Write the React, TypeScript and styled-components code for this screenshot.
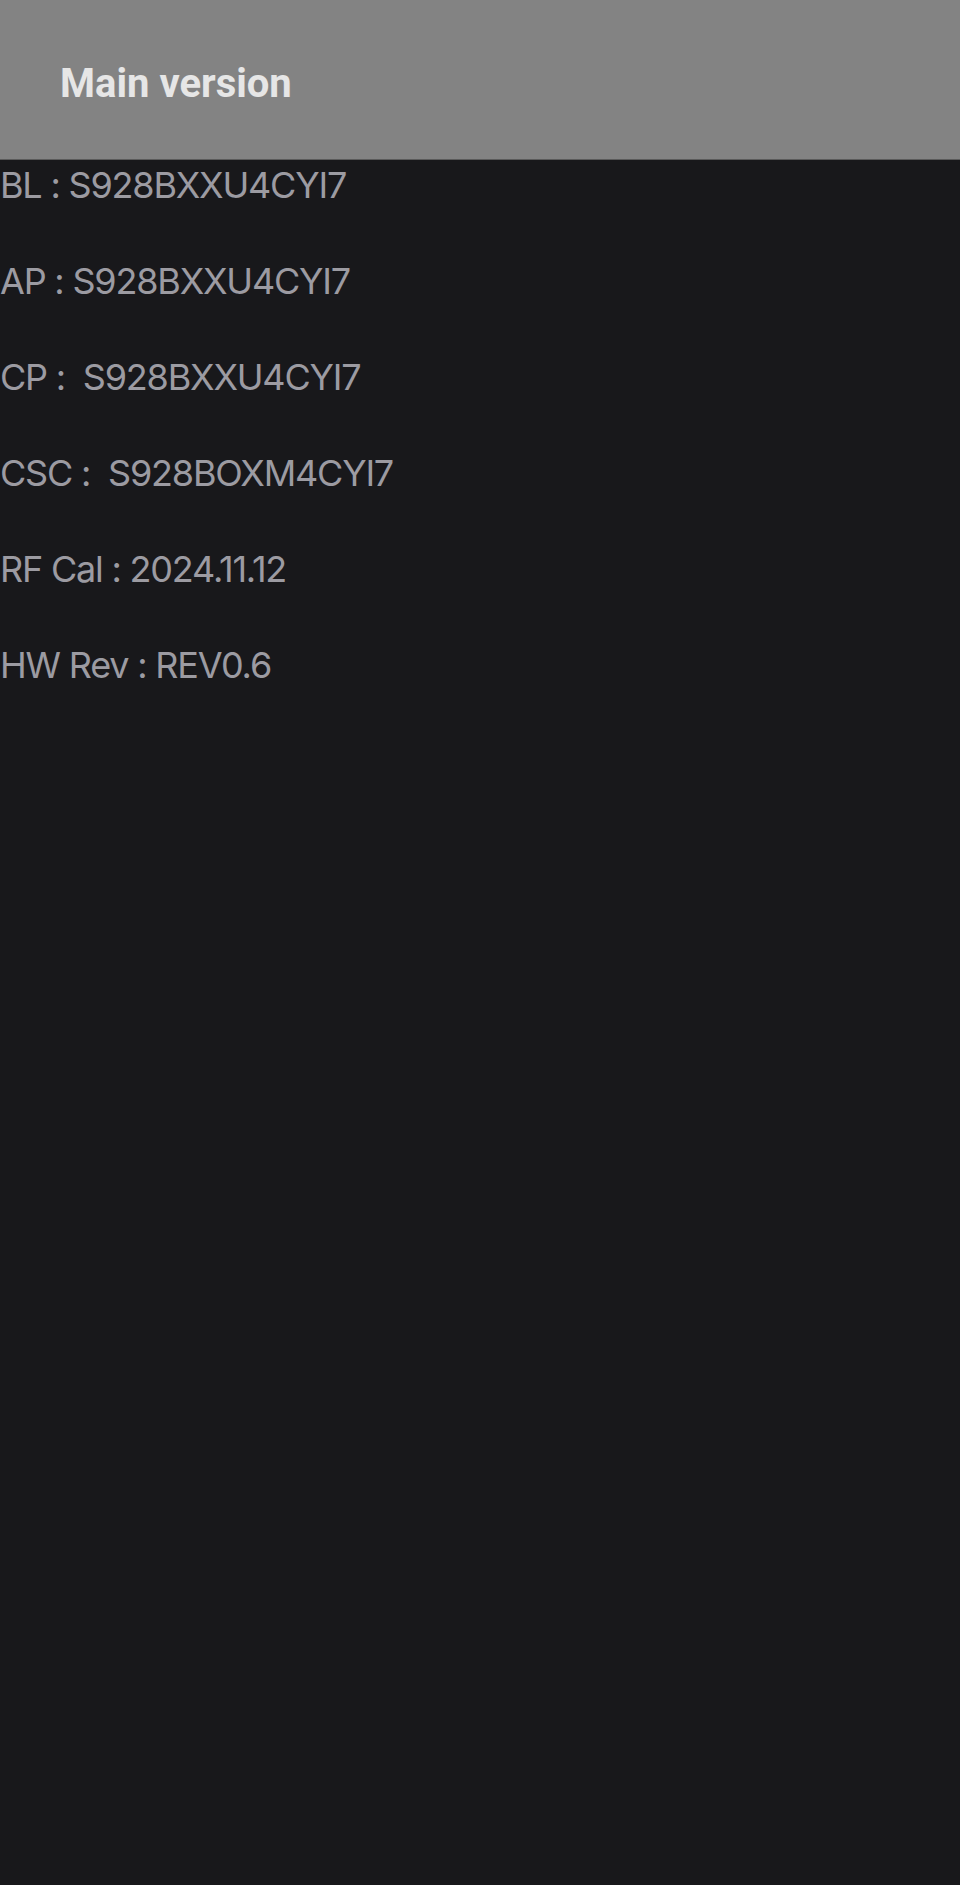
import styled, { createGlobalStyle } from "styled-components";

const GlobalStyle = createGlobalStyle`
  html, body {
    margin: 0;
    padding: 0;
    background: #18181b;
  }
`;

const Page = styled.div`
  width: 960px;
  min-height: 1885px;
  background: #18181b;
  display: flex;
  flex-direction: column;
`;

const Header = styled.header`
  height: 160px;
  background: #838383;
  display: flex;
  align-items: center;
  padding: 8px 0 0 60px;
  border-bottom: 1px solid #5a5a5a;
  box-sizing: border-box;
`;

const Title = styled.h1`
  margin: 0;
  font-family: Roboto, "Noto Sans", sans-serif;
  font-weight: 700;
  font-size: 40px;
  color: #e6e6e6;
`;

const List = styled.div`
  display: flex;
  flex-direction: column;
  gap: 52px;
  padding-top: 3px;
`;

const Row = styled.div`
  font-family: Inter, "Noto Sans", sans-serif;
  font-feature-settings: "calt" 0;
  font-size: 36px;
  letter-spacing: -1.2px;
  line-height: 44px;
  color: #9c9ba2;
  white-space: pre;
`;

const items = [
  "BL : S928BXXU4CYI7",
  "AP : S928BXXU4CYI7",
  "CP :  S928BXXU4CYI7",
  "CSC :  S928BOXM4CYI7",
  "RF Cal : 2024.11.12",
  "HW Rev : REV0.6",
];

const App = () => {
  return (
    <Page>
      <GlobalStyle />
      <Header>
        <Title>Main version</Title>
      </Header>
      <List>
        {items.map((t) => (
          <Row key={t}>{t}</Row>
        ))}
      </List>
    </Page>
  );
};

export default App;
